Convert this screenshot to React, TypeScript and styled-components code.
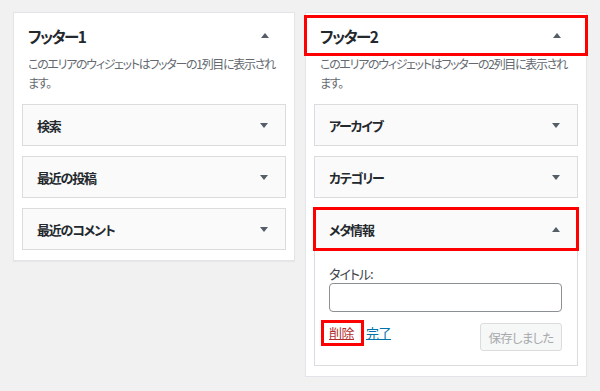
import styled, { createGlobalStyle, css } from "styled-components";

const GlobalStyle = createGlobalStyle`
  html, body {
    margin: 0;
    padding: 0;
    background: #f1f1f1;
  }
  body {
    font-family: "Noto Sans CJK JP", "Noto Sans", sans-serif;
    font-feature-settings: "palt";
    color: #23282d;
  }
  *, *::before, *::after {
    box-sizing: border-box;
  }
`;

const redBox = css`
  outline: 3px solid #ff0000;
  outline-offset: -1px;
`;

const Page = styled.div`
  display: flex;
  align-items: flex-start;
  gap: 10px;
  padding: 12px 0 0 13px;
`;

const Panel = styled.section`
  width: 282px;
  background: #fff;
  border: 1px solid #e2e4e7;
  box-shadow: 0 1px 1px rgba(0, 0, 0, 0.04);
  padding: 4px 0 10px;
`;

const PanelHeader = styled.div<{ $highlight?: boolean }>`
  display: flex;
  align-items: center;
  justify-content: space-between;
  height: 37px;
  padding: 0 25px 0 14px;
  ${(p) => p.$highlight && redBox}
`;

const PanelTitle = styled.h2`
  margin: 0;
  font-size: 15.5px;
  font-weight: 700;
  letter-spacing: -1.5px;
  color: #23282d;
`;

const Description = styled.p`
  margin: 0 0 12px;
  padding: 0 10px 0 14px;
  font-size: 12px;
  line-height: 19px;
  letter-spacing: -1.3px;
  color: #646970;
`;

const Holder = styled.div`
  display: flex;
  flex-direction: column;
  gap: 10px;
  padding: 0 8px;
`;

const Widget = styled.div`
  border: 1px solid #dcdcde;
  background: #fafafa;
`;

const WidgetTop = styled.div<{ $highlight?: boolean }>`
  display: flex;
  align-items: center;
  justify-content: space-between;
  height: 40px;
  padding: 0 17px 0 14px;
  ${(p) => p.$highlight && redBox}
`;

const WidgetTitle = styled.h3`
  margin: 0;
  font-size: 13px;
  font-weight: 700;
  letter-spacing: -1.2px;
  color: #23282d;
`;

const Caret = styled.span<{ $up?: boolean }>`
  width: 0;
  height: 0;
  border-left: 4px solid transparent;
  border-right: 4px solid transparent;
  ${(p) =>
    p.$up
      ? css`border-bottom: 5px solid #555d66;`
      : css`border-top: 5px solid #555d66;`}
`;

const WidgetInside = styled.div`
  background: #fff;
  padding: 16px 14px 14px;
`;

const FieldLabel = styled.label`
  display: block;
  font-size: 13px;
  line-height: 18px;
  letter-spacing: -1px;
  color: #3c434a;
`;

const TextInput = styled.input`
  display: block;
  width: 233px;
  height: 29px;
  margin: 0;
  border: 1px solid #8c8f94;
  border-radius: 4px;
  background: #fff;
`;

const Actions = styled.div`
  display: flex;
  align-items: flex-start;
  justify-content: space-between;
  margin-top: 11px;
  padding-right: 1px;
`;

const Links = styled.div`
  display: flex;
  align-items: center;
  gap: 5px;
  padding-top: 0;
`;

const ActionLink = styled.a<{ $danger?: boolean; $highlight?: boolean }>`
  font-size: 13px;
  line-height: 20px;
  letter-spacing: -0.5px;
  text-decoration: underline;
  cursor: pointer;
  color: ${(p) => (p.$danger ? "#b32d2e" : "#0073aa")};
  ${(p) =>
    p.$highlight &&
    css`
      margin-left: -5px;
      padding: 0 7px 0 5px;
      outline: 3px solid #ff0000;
      outline-offset: 0;
    `}
`;

const SaveButton = styled.button`
  width: 82px;
  height: 28px;
  padding: 0;
  white-space: nowrap;
  font-family: inherit;
  font-feature-settings: "palt";
  font-size: 12.5px;
  letter-spacing: -0.8px;
  color: #a7aaad;
  background: #f6f7f7;
  border: 1px solid #dcdcde;
  border-radius: 3px;
`;

type Item = { title: string };

const footer1: Item[] = [{ title: "検索" }, { title: "最近の投稿" }, { title: "最近のコメント" }];
const footer2: Item[] = [{ title: "アーカイブ" }, { title: "カテゴリー" }];

function ClosedWidget({ title }: Item) {
  return (
    <Widget>
      <WidgetTop>
        <WidgetTitle>{title}</WidgetTitle>
        <Caret />
      </WidgetTop>
    </Widget>
  );
}

export default function App() {
  return (
    <>
      <GlobalStyle />
      <Page>
        <Panel>
          <PanelHeader>
            <PanelTitle>フッター1</PanelTitle>
            <Caret $up />
          </PanelHeader>
          <Description>このエリアのウィジェットはフッターの1列目に表示されます。</Description>
          <Holder>
            {footer1.map((w) => (
              <ClosedWidget key={w.title} {...w} />
            ))}
          </Holder>
        </Panel>
        <Panel>
          <PanelHeader $highlight>
            <PanelTitle>フッター2</PanelTitle>
            <Caret $up />
          </PanelHeader>
          <Description>このエリアのウィジェットはフッターの2列目に表示されます。</Description>
          <Holder>
            {footer2.map((w) => (
              <ClosedWidget key={w.title} {...w} />
            ))}
            <Widget>
              <WidgetTop $highlight>
                <WidgetTitle>メタ情報</WidgetTitle>
                <Caret $up />
              </WidgetTop>
              <WidgetInside>
                <FieldLabel>タイトル:</FieldLabel>
                <TextInput type="text" />
                <Actions>
                  <Links>
                    <ActionLink $danger $highlight>削除</ActionLink>
                    <ActionLink>完了</ActionLink>
                  </Links>
                  <SaveButton disabled>保存しました</SaveButton>
                </Actions>
              </WidgetInside>
            </Widget>
          </Holder>
        </Panel>
      </Page>
    </>
  );
}
